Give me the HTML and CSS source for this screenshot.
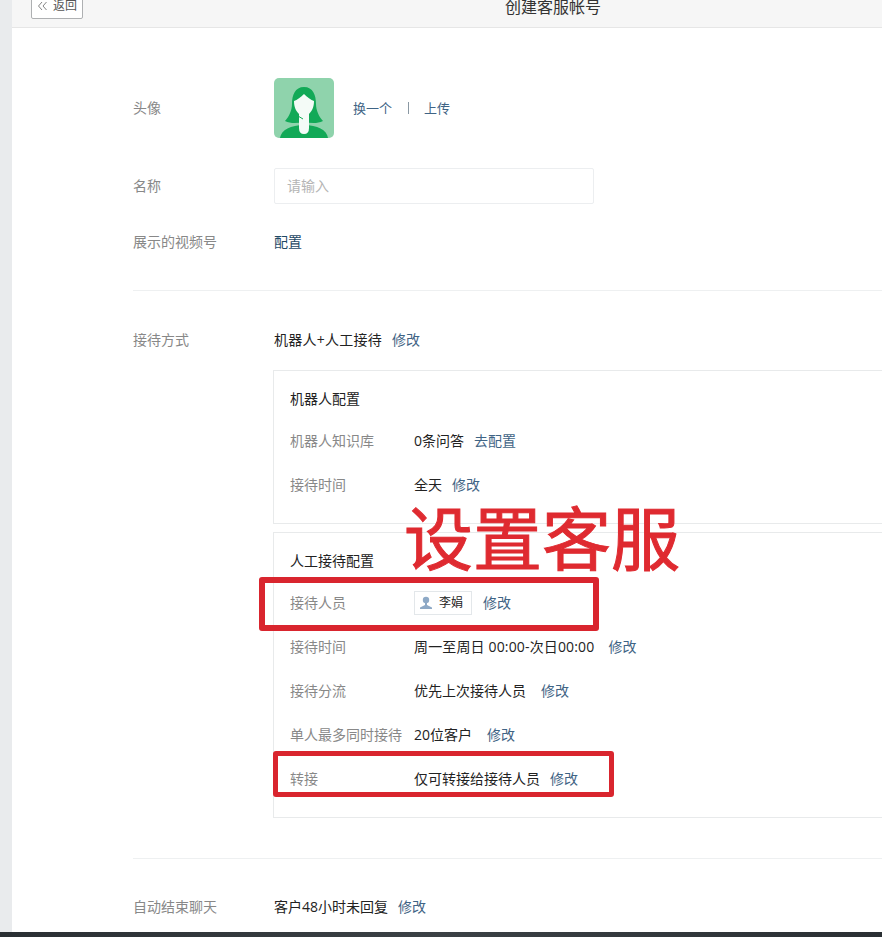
FILE: index.html
```html
<!DOCTYPE html>
<html lang="zh-CN">
<head>
<meta charset="utf-8">
<title>创建客服帐号</title>
<link rel="stylesheet" href="styles.css">
</head>
<body>
<div class="shell">
  <div class="gutter"></div>
  <main class="main">
    <header class="topbar">
      <a class="back">
        <svg class="back-arrows" viewBox="0 0 11 10" aria-hidden="true">
          <path d="M5 1L1.5 5L5 9M9.5 1L6 5L9.5 9" fill="none" stroke="#777" stroke-width="0.9"/>
        </svg>返回</a>
      <h1 class="title">创建客服帐号</h1>
    </header>
    <div class="form">
      <div class="row row-avatar">
        <div class="label">头像</div>
        <svg class="avatar" viewBox="0 0 60 60" aria-hidden="true">
          <rect width="60" height="60" rx="5" fill="#8fd3ac"/>
          <path d="M6 60C7 52 17 47 30 47S53 52 54 60Z" fill="#12a957"/>
          <path d="M30 9C21 9 18 17 18 26C18 32 15 39 11 43C17 46 24 45 30 44C36 45 43 46 49 43C45 39 42 32 42 26C42 17 39 9 30 9Z" fill="#12a957"/>
          <path d="M30 16C33 19 37 22 40 23C40 29 38 33 35 36L35 50Q35 56 30 56Q25 56 25 50L25 36C22 33 20 29 20 23C23 22 27 19 30 16Z" fill="#f4fbf7"/>
          <path d="M24 38L29 41" stroke="#12a957" stroke-width="1" fill="none"/>
        </svg>
        <a class="link avatar-link">换一个</a>
        <span class="sep"></span>
        <a class="link avatar-upload">上传</a>
      </div>
      <div class="row row-name">
        <div class="label">名称</div>
        <div class="input">请输入</div>
      </div>
      <div class="row row-video">
        <div class="label">展示的视频号</div>
        <a class="link link-dark">配置</a>
      </div>
      <div class="divider divider-a"></div>
      <div class="row row-mode">
        <div class="label">接待方式</div>
        <span class="value value-mode">机器人+人工接待</span><a class="link edit">修改</a>
      </div>
      <section class="card card-bot">
        <h2 class="card-title">机器人配置</h2>
        <div class="card-row">
          <div class="card-label">机器人知识库</div>
          <span class="value">0条问答</span><a class="link edit">去配置</a>
        </div>
        <div class="card-row">
          <div class="card-label">接待时间</div>
          <span class="value">全天</span><a class="link edit">修改</a>
        </div>
      </section>
      <section class="card card-human">
        <h2 class="card-title">人工接待配置</h2>
        <div class="card-row">
          <div class="card-label">接待人员</div>
          <span class="tag">
            <svg class="tag-icon" viewBox="0 0 16 16" aria-hidden="true">
              <circle cx="8" cy="5" r="3.2" fill="#8ea9c6"/>
              <path d="M7 8H9V10L14 12.5V14H2V12.5L7 10Z" fill="#8ea9c6"/>
            </svg>李娟</span><a class="link edit edit-tag">修改</a>
        </div>
        <div class="card-row">
          <div class="card-label">接待时间</div>
          <span class="value value-time">周一至周日 00:00-次日00:00</span><a class="link edit edit-time">修改</a>
        </div>
        <div class="card-row">
          <div class="card-label">接待分流</div>
          <span class="value">优先上次接待人员</span><a class="link edit edit-wide">修改</a>
        </div>
        <div class="card-row">
          <div class="card-label">单人最多同时接待</div>
          <span class="value">20位客户</span><a class="link edit edit-wide">修改</a>
        </div>
        <div class="card-row">
          <div class="card-label">转接</div>
          <span class="value">仅可转接给接待人员</span><a class="link edit">修改</a>
        </div>
      </section>
      <div class="divider divider-b"></div>
      <div class="row row-auto">
        <div class="label">自动结束聊天</div>
        <span class="value">客户48小时未回复</span><a class="link edit">修改</a>
      </div>
    </div>
  </main>
</div>
<div class="taskbar"></div>
<div class="note-text">设置客服</div>
<div class="note-box note-box-a"></div>
<div class="note-box note-box-b"></div>
</body>
</html>
```
FILE: styles.css
```css
* { box-sizing: border-box; }
html, body { margin: 0; height: 937px; overflow: hidden; }
body {
  position: relative;
  display: flex;
  flex-direction: column;
  background: #fff;
  color: #222;
  font: 14px/20px "Open Sans", "Noto Sans CJK SC", "Liberation Sans", sans-serif;
}
.shell { flex: 1; display: flex; min-height: 0; }
.gutter { width: 12px; flex: none; background: #e9ebed; }
.main { flex: 1; min-width: 0; overflow: hidden; }
.taskbar { height: 5px; flex: none; background: linear-gradient(90deg, #2a2f33, #3b4145 50%, #2a2f33); }

.topbar {
  height: 28px;
  display: flex;
  align-items: flex-end;
  padding: 0 0 8px 19px;
  background: #f6f6f6;
  border-bottom: 1px solid #e6e6e6;
}
.back {
  width: 52px;
  height: 26px;
  flex: none;
  display: flex;
  align-items: center;
  padding-left: 5px;
  gap: 5px;
  border: 1px solid #aeb0b2;
  border-radius: 2px;
  background: #fff;
  font-size: 12px;
  color: #555;
}
.back-arrows { width: 11px; height: 10px; flex: none; }
.title {
  margin: 0 0 -1px 422px;
  flex: none;
  font-size: 16px;
  font-weight: 400;
  line-height: 26px;
  color: #333;
}

.form { padding-left: 121px; }
.row { display: flex; align-items: center; min-height: 20px; }
.label { width: 141px; flex: none; color: #888; }
.value { color: #222; }
.value-mode { letter-spacing: 0.25px; }
.value-time { letter-spacing: 0.15px; }
.link { color: #3f6485; }
.link-dark { color: #1f4a66; }
.edit { margin-left: 10px; }
.edit-tag { margin-left: 11px; }
.edit-wide { margin-left: 15px; }
.edit-time { margin-left: 14px; }

.row-avatar { margin-top: 50px; height: 60px; }
.avatar { width: 60px; height: 60px; flex: none; }
.avatar-link, .avatar-upload { font-size: 13px; }
.avatar-link { margin-left: 19px; }
.sep { width: 1px; height: 12px; margin: 0 15px 0 16px; background: #8a98a3; }

.row-name { margin-top: 30px; }
.input {
  width: 320px;
  height: 36px;
  padding: 7px 12px;
  border: 1px solid #eceef0;
  border-radius: 2px;
  color: #b5b5b5;
}
.row-video { margin-top: 28px; }
.divider { height: 1px; background: #eef0f1; }
.divider-a { margin-top: 38px; }
.row-mode { margin-top: 39px; }

.card {
  width: 800px;
  margin-left: 140px;
  padding: 18px 0 28px 16px;
  border: 1px solid #e8eaeb;
}
.card-bot { margin-top: 20px; }
.card-human { margin-top: 8px; }
.card-title { margin: 0; font-size: 14px; font-weight: 400; line-height: 20px; color: #222; }
.card-row { display: flex; align-items: center; height: 20px; margin-top: 24px; }
.card-title + .card-row { margin-top: 22px; }
.card-label { width: 124px; flex: none; font-size: 14px; color: #888; white-space: nowrap; }

.tag {
  width: 58px;
  height: 24px;
  display: flex;
  align-items: center;
  flex: none;
  padding-left: 3px;
  gap: 5px;
  border: 1px solid #e3e7ea;
  font-size: 12px;
  color: #222;
}
.tag-icon { width: 16px; height: 16px; flex: none; }

.divider-b { margin-top: 40px; }
.row-auto { margin-top: 38px; }

.note-text {
  position: absolute;
  left: 404px;
  top: 490px;
  font-size: 69px;
  line-height: 96px;
  color: #df2a30;
  -webkit-text-stroke: 1px #df2a30;
  white-space: nowrap;
}
.note-box {
  position: absolute;
  border: 6px solid #d9252e;
  border-radius: 3px;
}
.note-box-a { left: 259px; top: 577px; width: 340px; height: 54px; }
.note-box-b { left: 273px; top: 751px; width: 341px; height: 46px; border-width: 5px; }
```
